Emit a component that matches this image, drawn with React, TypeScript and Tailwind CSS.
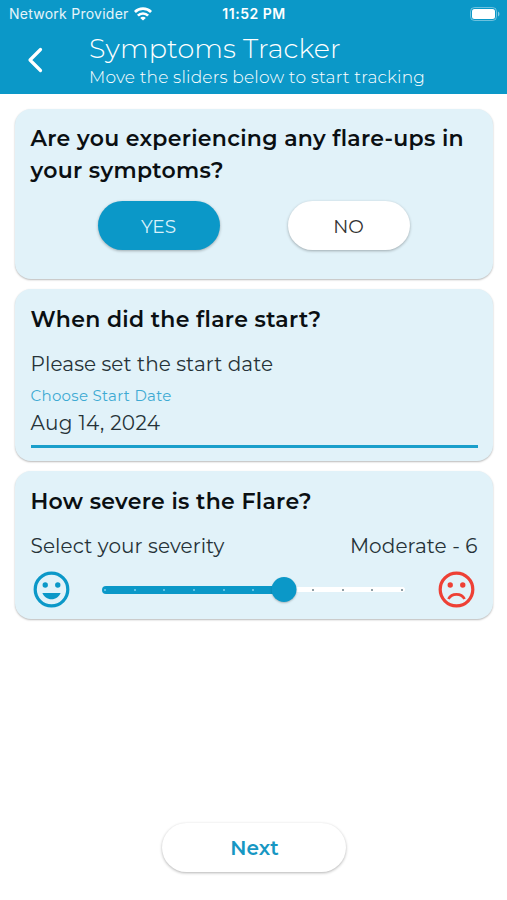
import type { ReactNode } from "react";
import { useState } from "react";

const STEPS = [0, 1, 2, 3, 4, 5, 6, 7, 8, 9, 10];

function WifiIcon() {
  return (
    <svg viewBox="0 0 18 14" className="h-[14px] w-[18px]" fill="none" stroke="white" strokeWidth="2.7">
      <path d="M0.9 5C5.2 0.6 12.8 0.6 17.1 5" />
      <path d="M3.9 8.6C6.6 5.8 11.4 5.8 14.1 8.6" />
      <path d="M9 13.6L6.2 10.9C7.8 9.5 10.2 9.5 11.8 10.9Z" fill="white" stroke="none" />
    </svg>
  );
}

function BatteryIcon() {
  return (
    <svg viewBox="0 0 30 14" className="h-[14px] w-[30px]">
      <rect x="0.5" y="0.5" width="26" height="13" rx="4" fill="none" stroke="white" strokeOpacity="0.4" />
      <rect x="2" y="2" width="23" height="10" rx="2.5" fill="white" />
      <path d="M28 4.5C30 5.5 30 8.5 28 9.5Z" fill="white" fillOpacity="0.5" />
    </svg>
  );
}

function Face({ mood }: { mood: "happy" | "sad" }) {
  return (
    <svg
      viewBox="0 0 24 24"
      className={mood === "happy" ? "size-[43px] text-[#0b98c8]" : "size-[43px] text-[#ee4035]"}
      fill="currentColor"
    >
      <circle cx="12" cy="12" r="9.1" fill="none" stroke="currentColor" strokeWidth="1.8" />
      <circle cx="8.5" cy="9.5" r="1.5" />
      <circle cx="15.5" cy="9.5" r="1.5" />
      {mood === "happy" ? (
        <path d="M12 17.5C14.33 17.5 16.3 16.04 17.11 14H6.89C7.69 16.04 9.67 17.5 12 17.5Z" />
      ) : (
        <path d="M7.5 17.3C9.3 13.8 14.7 13.8 16.5 17.3" fill="none" stroke="currentColor" strokeWidth="1.5" />
      )}
    </svg>
  );
}

function Card({ className, children }: { className: string; children: ReactNode }) {
  return (
    <section className={`rounded-[16px] bg-[#e1f2f9] px-[15.5px] shadow-[0_1px_2px_rgba(0,0,0,0.28)] ${className}`}>
      {children}
    </section>
  );
}

function Question({ children }: { children: ReactNode }) {
  return (
    <h2 className="text-[22px] leading-[32px] font-semibold tracking-[0.3px] text-[#0a0f12]">{children}</h2>
  );
}

export default function App() {
  const [flare, setFlare] = useState(true);
  const severity = 6;

  const on = "bg-[#0b98c8] text-[#d9f1fb]";
  const off = "bg-white text-[#333]";
  const pill = "h-[49px] w-[122px] rounded-full pt-[2px] text-[18.5px] shadow-[0_1px_3px_rgba(0,0,0,0.3)]";

  return (
    <div className="flex h-[900px] w-[507px] flex-col overflow-hidden bg-white font-['Montserrat','Inter',sans-serif] whitespace-nowrap text-[#263238]">
      <header className="h-[94px] shrink-0 bg-[#0b98c8] text-white">
        {/* Status bar */}
        <div className="grid h-[28px] grid-cols-3 items-center pr-[7px] pb-px pl-[9px] font-['Inter',sans-serif] text-[14px]">
          <div className="flex items-center gap-[5px]">
            <span className="tracking-[0.25px] text-white/90">Network Provider</span>
            <WifiIcon />
          </div>
          <span className="pr-px text-center font-semibold tracking-[0.5px]">11:52 PM</span>
          <div className="flex justify-end">
            <BatteryIcon />
          </div>
        </div>

        <div className="flex">
          <button className="flex h-[64px] w-[89px] items-center pl-[27px]">
            <svg viewBox="0 0 16 26" className="h-[26px] w-[16px]" fill="none" stroke="white" strokeWidth="3.2">
              <path d="M13.5 2.5L3 13L13.5 23.5" strokeLinecap="round" strokeLinejoin="round" />
            </svg>
          </button>
          <div className="pt-[4px]">
            <h1 className="text-[27px] leading-[34px] font-light tracking-[0.1px]">Symptoms Tracker</h1>
            <p className="text-[17px] leading-[22px] font-light tracking-[0.18px]">
              Move the sliders below to start tracking
            </p>
          </div>
        </div>
      </header>

      <main className="flex flex-col gap-[10px] pt-[15px] pr-[14px] pl-[15px]">
        <Card className="h-[170px] pt-[14px]">
          <Question>
            Are you experiencing any flare-ups in
            <br />
            your symptoms?
          </Question>
          <div className="mt-[14px] flex justify-between pr-[68px] pl-[67px]">
            <button onClick={() => setFlare(true)} className={`${pill} ${flare ? on : off}`}>
              YES
            </button>
            <button onClick={() => setFlare(false)} className={`${pill} ${flare ? off : on}`}>
              NO
            </button>
          </div>
        </Card>

        <Card className="h-[172px] pt-[15px]">
          <Question>When did the flare start?</Question>
          <p className="mt-[16px] text-[20px] leading-[24px] tracking-[0.08px]">Please set the start date</p>
          <label className="mt-[11px] block text-[15px] leading-[18px] tracking-[0.3px] text-[#3daad3]">
            Choose Start Date
          </label>
          <div className="h-[43px] border-b-[3px] border-[#1a9fcb] pt-[5px] text-[20px] leading-[26px] tracking-[0.35px]">
            Aug 14, 2024
          </div>
        </Card>

        <Card className="h-[148px] pt-[15px]">
          <Question>How severe is the Flare?</Question>
          <div className="mt-[16px] flex justify-between text-[20px] leading-[24px] tracking-[0.1px]">
            <span>Select your severity</span>
            <span>Moderate - 6</span>
          </div>
          <div className="mt-[10px] -ml-px flex items-center justify-between">
            <Face mood="happy" />
            <div className="relative flex h-[25px] w-[303px] items-center">
              <div className="h-[5px] w-full rounded-full bg-white" />
              <div
                className="absolute left-0 h-[8px] rounded-full bg-[#0b98c8]"
                style={{ width: `${severity * 10}%` }}
              />
              <div className="absolute inset-x-[2px] flex justify-between">
                {STEPS.map((s) => (
                  <span
                    key={s}
                    className={`size-[2px] rounded-full ${s < severity ? "bg-[#7fd0ee]" : "bg-[#6b7f88]"}`}
                  />
                ))}
              </div>
              <div
                className="absolute size-[25px] -translate-x-1/2 rounded-full bg-[#0b98c8] shadow-[0_1px_2px_rgba(0,0,0,0.25)]"
                style={{ left: `${severity * 10}%` }}
              />
            </div>
            <Face mood="sad" />
          </div>
        </Card>
      </main>

      <button className="mx-auto mt-auto mb-[28px] h-[49px] w-[184px] shrink-0 rounded-full bg-white pl-[2px] text-[20px] font-semibold text-[#1797c3] shadow-[0_1px_3px_rgba(0,0,0,0.3)]">
        Next
      </button>
    </div>
  );
}
